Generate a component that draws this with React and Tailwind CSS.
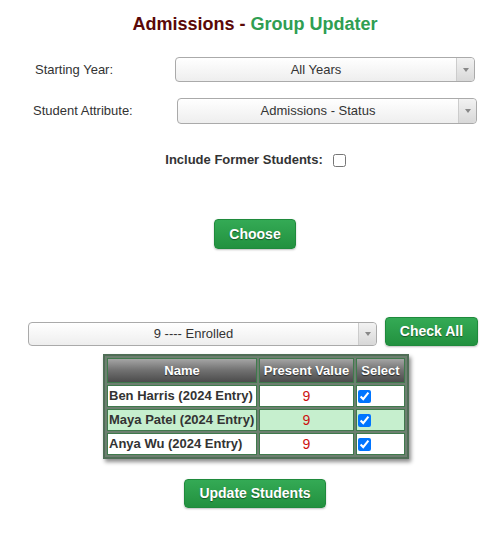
import { useState } from "react";

const students = [
  { id: 1, name: "Ben Harris (2024 Entry)", value: "9", hl: false },
  { id: 2, name: "Maya Patel (2024 Entry)", value: "9", hl: true },
  { id: 3, name: "Anya Wu (2024 Entry)", value: "9", hl: false },
];

function FakeSelect({ label, className }) {
  return (
    <div
      className={`relative flex items-center rounded-[4px] border border-[#aaaaaa] bg-gradient-to-b from-white to-[#eeeeee] text-[13px] text-[#333] ${className}`}
    >
      <span className="flex-1 pr-[18px] text-center">{label}</span>
      <span className="absolute right-0 top-0 bottom-0 flex w-[18px] items-center justify-center rounded-r-[4px] border-l border-[#cccccc] bg-gradient-to-b from-[#f2f2f2] to-[#d8d8d8]">
        <span className="h-0 w-0 border-x-[3px] border-t-[4px] border-x-transparent border-t-[#888]"></span>
      </span>
    </div>
  );
}

function GreenButton({ children, className }) {
  return (
    <button
      className={`rounded-[4px] border border-[#1f8a3c] bg-gradient-to-b from-[#34aa55] to-[#22913f] text-[14px] font-bold text-white [text-shadow:0_1px_1px_rgba(0,0,0,0.45)] shadow-[0_1px_2px_rgba(0,0,0,0.25)] ${className}`}
    >
      {children}
    </button>
  );
}

export default function App() {
  const [checked, setChecked] = useState([true, true, true]);

  return (
    <div className="w-[501px] h-[534px] bg-white font-['Liberation_Sans',Arial,sans-serif] text-[#333]">
      {/* Title */}
      <h1 className="pt-[12px] pl-[9px] text-center text-[18px] font-bold leading-[24px]">
        <span className="text-[#5a0808]">Admissions - </span>
        <span className="text-[#2f9e52]">Group Updater</span>
      </h1>

      {/* Filters */}
      <div className="mt-[21px] flex h-[25px] items-center">
        <label className="w-[175px] pl-[35px] text-[13px]">Starting Year:</label>
        <FakeSelect label="All Years" className="h-[25px] w-[300px]" />
      </div>
      <div className="mt-[16px] flex h-[26px] items-center">
        <label className="w-[177px] pl-[33px] text-[13px]">Student Attribute:</label>
        <FakeSelect label="Admissions - Status" className="h-[26px] w-[300px]" />
      </div>

      <div className="mt-[28px] flex h-[16px] items-center justify-center pl-[10px]">
        <span className="text-[13px] font-bold">Include Former Students:</span>
        <input type="checkbox" className="ml-[10px] h-[13px] w-[13px]" />
      </div>

      <div className="mt-[51px] flex justify-center pl-[9px]">
        <GreenButton className="h-[30px] w-[82px]">Choose</GreenButton>
      </div>

      {/* Value picker */}
      <div className="mt-[68px] flex items-end pl-[28px]">
        <FakeSelect label="9 ---- Enrolled" className="h-[24px] w-[349px]" />
        <GreenButton className="ml-[8px] h-[29px] w-[93px]">Check All</GreenButton>
      </div>

      {/* Students table */}
      <div className="mt-[8px] pl-[103px]">
        <table className="border-separate border-spacing-[2px] border-2 border-[#4f6e56] bg-[#6d7f70] shadow-[2px_3px_4px_rgba(0,0,0,0.45)]">
          <thead>
            <tr>
              {["Name", "Present Value", "Select"].map((h, i) => (
                <th
                  key={h}
                  className={`h-[25px] whitespace-nowrap border border-[#3f7a4c] bg-gradient-to-b from-[#a5a5a5] via-[#707070] to-[#4c4c4c] px-[2px] text-[13px] font-bold text-white [text-shadow:0_1px_1px_rgba(0,0,0,0.6)] ${
                    i === 0 ? "w-[150px]" : i === 1 ? "w-[95px]" : "w-[49px]"
                  }`}
                >
                  {h}
                </th>
              ))}
            </tr>
          </thead>
          <tbody>
            {students.map((s, idx) => {
              const bg = s.hl ? "bg-[#c6efce]" : "bg-white";
              return (
                <tr key={s.id}>
                  <td className={`h-[22px] whitespace-nowrap border border-[#3f7a4c] px-[1px] text-[13px] leading-[16px] font-bold text-[#333] ${bg}`}>
                    {s.name}
                  </td>
                  <td className={`h-[22px] border border-[#3f7a4c] text-center text-[14px] leading-[16px] text-[#cc1111] ${bg}`}>
                    {s.value}
                  </td>
                  <td className={`h-[22px] border border-[#3f7a4c] px-[1px] ${bg}`}>
                    <input
                      type="checkbox"
                      checked={checked[idx]}
                      onChange={() =>
                        setChecked((prev) => prev.map((c, j) => (j === idx ? !c : c)))
                      }
                      className="block h-[13px] w-[13px]"
                    />
                  </td>
                </tr>
              );
            })}
          </tbody>
        </table>
      </div>

      <div className="mt-[20px] flex justify-center pl-[9px]">
        <GreenButton className="h-[29px] w-[142px]">Update Students</GreenButton>
      </div>
    </div>
  );
}
